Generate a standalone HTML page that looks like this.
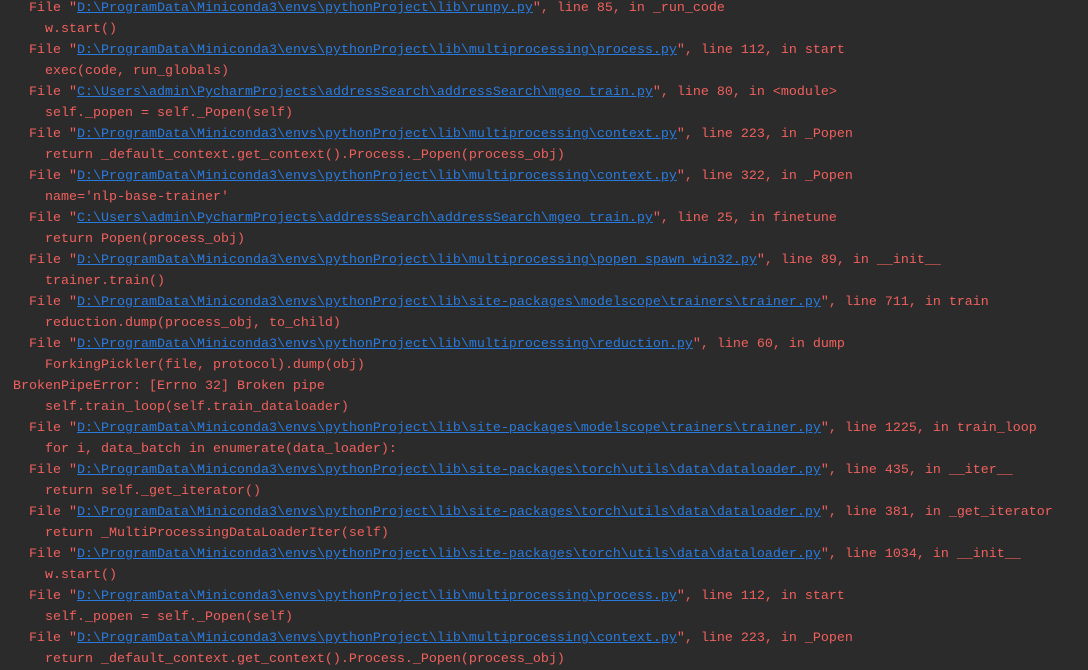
<!DOCTYPE html>
<html><head><meta charset="utf-8"><style>
html,body{margin:0;padding:0;background:#2b2b2b;width:1088px;height:670px;overflow:hidden}
pre{margin:0;position:absolute;left:13px;top:-2px;font-family:"Liberation Mono",monospace;font-size:13.33px;line-height:21px;color:#f0605c;white-space:pre}
a{color:#287bde;text-decoration:underline}
</style></head><body><pre>  File "<a>D:\ProgramData\Miniconda3\envs\pythonProject\lib\runpy.py</a>", line 85, in _run_code
    w.start()
  File "<a>D:\ProgramData\Miniconda3\envs\pythonProject\lib\multiprocessing\process.py</a>", line 112, in start
    exec(code, run_globals)
  File "<a>C:\Users\admin\PycharmProjects\addressSearch\addressSearch\mgeo_train.py</a>", line 80, in &lt;module&gt;
    self._popen = self._Popen(self)
  File "<a>D:\ProgramData\Miniconda3\envs\pythonProject\lib\multiprocessing\context.py</a>", line 223, in _Popen
    return _default_context.get_context().Process._Popen(process_obj)
  File "<a>D:\ProgramData\Miniconda3\envs\pythonProject\lib\multiprocessing\context.py</a>", line 322, in _Popen
    name='nlp-base-trainer'
  File "<a>C:\Users\admin\PycharmProjects\addressSearch\addressSearch\mgeo_train.py</a>", line 25, in finetune
    return Popen(process_obj)
  File "<a>D:\ProgramData\Miniconda3\envs\pythonProject\lib\multiprocessing\popen_spawn_win32.py</a>", line 89, in __init__
    trainer.train()
  File "<a>D:\ProgramData\Miniconda3\envs\pythonProject\lib\site-packages\modelscope\trainers\trainer.py</a>", line 711, in train
    reduction.dump(process_obj, to_child)
  File "<a>D:\ProgramData\Miniconda3\envs\pythonProject\lib\multiprocessing\reduction.py</a>", line 60, in dump
    ForkingPickler(file, protocol).dump(obj)
BrokenPipeError: [Errno 32] Broken pipe
    self.train_loop(self.train_dataloader)
  File "<a>D:\ProgramData\Miniconda3\envs\pythonProject\lib\site-packages\modelscope\trainers\trainer.py</a>", line 1225, in train_loop
    for i, data_batch in enumerate(data_loader):
  File "<a>D:\ProgramData\Miniconda3\envs\pythonProject\lib\site-packages\torch\utils\data\dataloader.py</a>", line 435, in __iter__
    return self._get_iterator()
  File "<a>D:\ProgramData\Miniconda3\envs\pythonProject\lib\site-packages\torch\utils\data\dataloader.py</a>", line 381, in _get_iterator
    return _MultiProcessingDataLoaderIter(self)
  File "<a>D:\ProgramData\Miniconda3\envs\pythonProject\lib\site-packages\torch\utils\data\dataloader.py</a>", line 1034, in __init__
    w.start()
  File "<a>D:\ProgramData\Miniconda3\envs\pythonProject\lib\multiprocessing\process.py</a>", line 112, in start
    self._popen = self._Popen(self)
  File "<a>D:\ProgramData\Miniconda3\envs\pythonProject\lib\multiprocessing\context.py</a>", line 223, in _Popen
    return _default_context.get_context().Process._Popen(process_obj)</pre></body></html>
